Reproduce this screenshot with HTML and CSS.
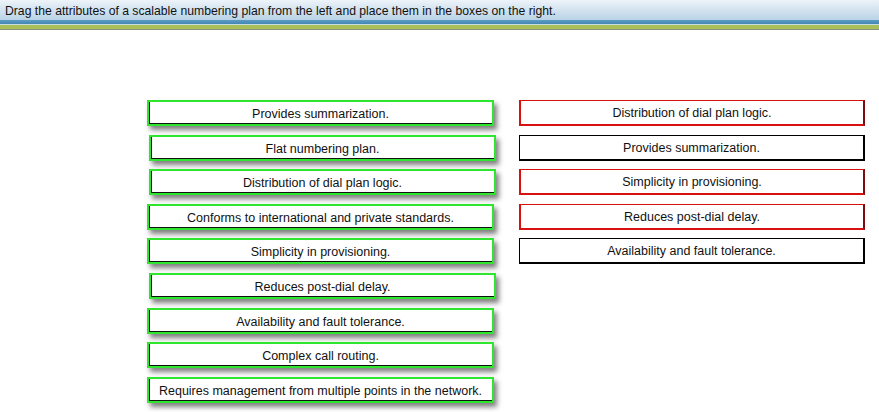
FILE: index.html
```html
<!DOCTYPE html>
<html lang="en">
  <head>
    <meta charset="UTF-8" />
    <title>Drag and drop</title>
    <link rel="stylesheet" href="styles.css">
  </head>
  <body>
    <div class="header">
      <div class="question">Drag the attributes of a scalable numbering plan from the left and place them in the boxes on the right.</div>
      <div class="band_blue"></div>
      <div class="band_green"></div>
    </div>

    <div class="board">
      <div class="column">
        <div class="item">Provides summarization.</div>
        <div class="item shift">Flat numbering plan.</div>
        <div class="item shift">Distribution of dial plan logic.</div>
        <div class="item">Conforms to international and private standards.</div>
        <div class="item">Simplicity in provisioning.</div>
        <div class="item shift">Reduces post-dial delay.</div>
        <div class="item">Availability and fault tolerance.</div>
        <div class="item">Complex call routing.</div>
        <div class="item">Requires management from multiple points in the network.</div>
      </div>
      <div class="column">
        <div class="target wrong">Distribution of dial plan logic.</div>
        <div class="target right">Provides summarization.</div>
        <div class="target wrong">Simplicity in provisioning.</div>
        <div class="target wrong">Reduces post-dial delay.</div>
        <div class="target right">Availability and fault tolerance.</div>
      </div>
    </div>
  </body>
</html>
```

FILE: styles.css
```css
* {
  margin: 0;
  padding: 0;
  box-sizing: border-box;
}
body {
  width: 879px;
  height: 412px;
  overflow: hidden;
  background-color: white;
  font-family: "Liberation Sans", Arial, sans-serif;
  font-size: 12.5px;
  color: #111;
}
.header {
  border-bottom: 1px solid #8a8f80;
}
.question {
  height: 20px;
  line-height: 22px;
  padding-left: 5px;
  font-size: 12.2px;
  background: linear-gradient(#eef4f9, #dde9f3 30%, #b9d3e6);
}
.band_blue {
  height: 5px;
  background: linear-gradient(#5b9dc4, #4386b3);
  border-bottom: 1px solid #c9dde0;
}
.band_green {
  height: 4px;
  background-color: #a9c05a;
}
.board {
  display: flex;
  gap: 25px;
  padding-left: 147px;
  padding-top: 70px;
}
.column {
  width: 347px;
  display: flex;
  flex-direction: column;
  gap: 8.6px;
}
.item,
.target {
  height: 26px;
  line-height: 24px;
  text-align: center;
  background-color: white;
}
.item {
  border: 2px solid #2fe62f;
  box-shadow: inset 1px -1px 0 #111, 3px 4px 5px rgba(0, 0, 0, 0.5);
}
.item.shift {
  margin-left: 2px;
  margin-right: -2px;
}
.target {
  width: 346px;
  line-height: 25px;
}
.target.wrong {
  border: 2px solid #d81010;
  border-top-width: 1px;
  border-right-color: #7a0d0d;
}
.target.right {
  border: 1px solid #000;
  border-right-width: 2px;
  border-bottom-width: 2px;
}
```
